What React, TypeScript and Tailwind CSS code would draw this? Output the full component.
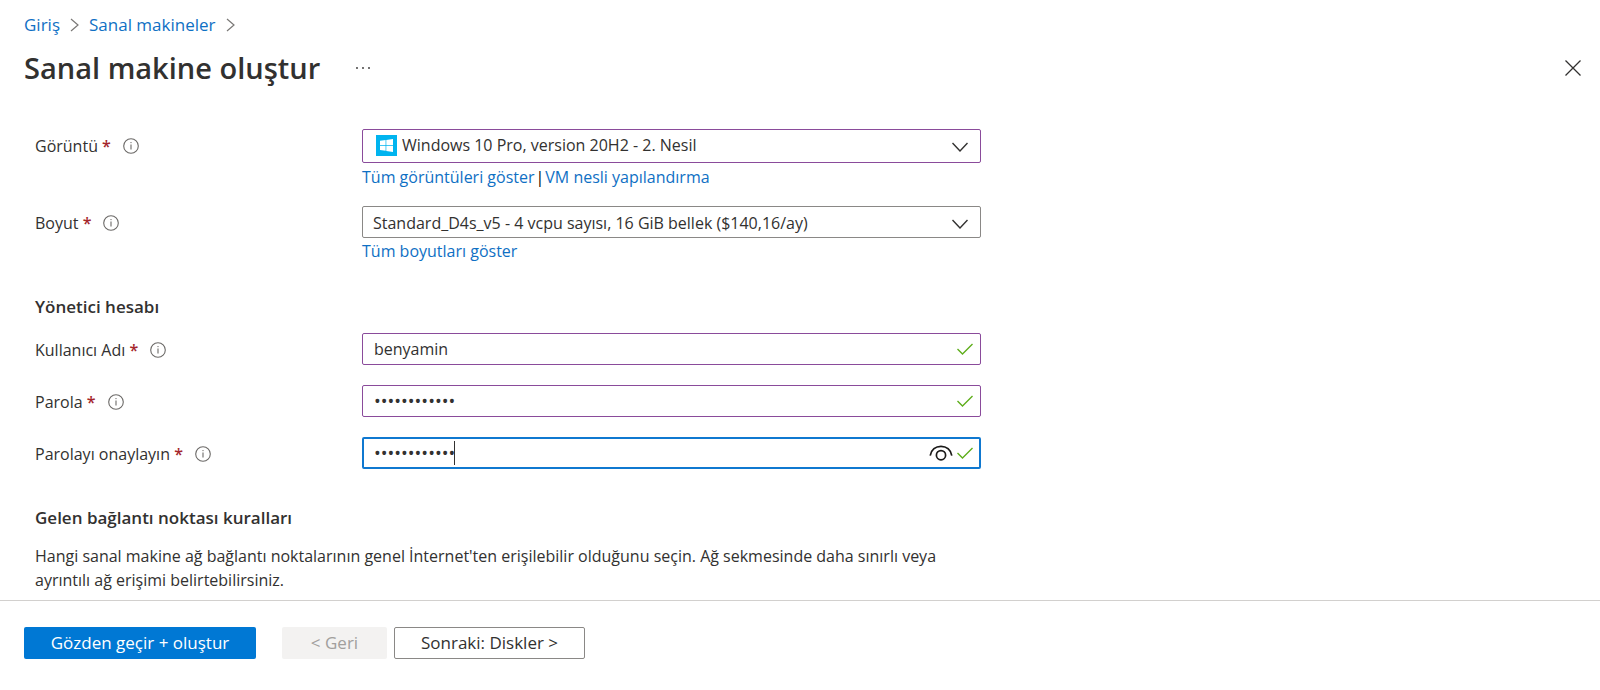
import React from 'react';

const BreadcrumbArrow: React.FC = () => (
  <svg width="9" height="14" viewBox="0 0 9 14" fill="none" stroke="#7a7876" strokeWidth="1.2" aria-hidden="true">
    <path d="M1 1l7 6-7 6" />
  </svg>
);

const InfoIcon: React.FC = () => (
  <svg width="16" height="16" viewBox="0 0 16 16" fill="none" stroke="#6b6967" aria-hidden="true">
    <circle cx="8" cy="8" r="7.3" strokeWidth="1.1" />
    <path d="M8 6.6v5" strokeWidth="1.1" />
    <circle cx="8" cy="4.6" r="0.7" fill="#6b6967" stroke="none" />
  </svg>
);

const ChevronDown: React.FC = () => (
  <svg
    className="pointer-events-none absolute top-3 right-3"
    width="16"
    height="10"
    viewBox="0 0 16 10"
    fill="none"
    stroke="#323130"
    strokeWidth="1.4"
    aria-hidden="true"
  >
    <path d="M0.5 1L8 9 15.5 1" />
  </svg>
);

const CheckIcon: React.FC = () => (
  <svg width="16" height="12" viewBox="0 0 16 12" fill="none" stroke="#5fae1c" strokeWidth="1.4" aria-hidden="true">
    <path d="M0.5 6l5 5L15.5 1" />
  </svg>
);

const EyeIcon: React.FC = () => (
  <svg width="24" height="16" viewBox="0 0 24 16" fill="none" stroke="#1b1a19" strokeWidth="1.7" aria-hidden="true">
    <path d="M1.2 10.6C2.2 4.8 6.6 1.3 12 1.3S21.8 4.8 22.8 10.6" />
    <circle cx="12" cy="10.2" r="4.6" />
  </svg>
);

const WindowsIcon: React.FC = () => (
  <svg className="shrink-0" width="21" height="21" viewBox="0 0 21 21" aria-hidden="true">
    <rect width="21" height="21" fill="#00b4ef" />
    <path fill="#fff" d="M4 5.8l5.6-.8v5H4zM10.3 4.9L17 4v6h-6.7zM4 10.7h5.6v5L4 14.9zM10.3 10.7H17v6.2l-6.7-1z" />
  </svg>
);

interface FieldLabelProps {
  htmlFor: string;
  text: string;
}

const FieldLabel: React.FC<FieldLabelProps> = ({ htmlFor, text }) => (
  <div className="flex h-[34px] w-[327px] shrink-0 items-center">
    <label htmlFor={htmlFor}>
      {text} <span className="font-semibold text-[#a4262c]">*</span>
    </label>
    <button type="button" className="ml-3" aria-label={`${text} bilgisi`}>
      <InfoIcon />
    </button>
  </div>
);

const link = 'text-[#0f70c4] hover:underline';

const App: React.FC = () => {
  return (
    <div className="flex min-h-screen flex-col bg-white font-['Segoe_UI','Open_Sans',sans-serif] text-base text-[#323130]">
      <header className="px-6 pt-3">
        <nav className="flex h-[26px] items-center gap-2.5 text-[17px]" aria-label="İçerik haritası">
          <a href="#" className={link}>Giriş</a>
          <BreadcrumbArrow />
          <a href="#" className={link}>Sanal makineler</a>
          <BreadcrumbArrow />
        </nav>
        <div className="mt-1.5 flex h-12 items-center">
          <h1 className="text-[29px] font-semibold">Sanal makine oluştur</h1>
          <button type="button" className="ml-9" aria-label="Diğer">
            <svg width="14" height="4" viewBox="0 0 14 4" fill="#323130">
              <circle cx="1" cy="2" r="0.9" />
              <circle cx="7" cy="2" r="0.9" />
              <circle cx="13" cy="2" r="0.9" />
            </svg>
          </button>
          <button type="button" className="-mr-[5px] ml-auto" aria-label="Kapat">
            <svg width="16" height="16" viewBox="0 0 16 16" stroke="#323130" strokeWidth="1.3">
              <path d="M0.5 0.5l15 15M15.5 0.5l-15 15" />
            </svg>
          </button>
        </div>
      </header>

      <main className="px-[35px] pt-[37px] pb-2">
        <div className="flex">
          <FieldLabel htmlFor="image" text="Görüntü" />
          <div className="w-full max-w-[619px]">
            <div className="relative flex h-[34px] items-center rounded-xs border border-[#8a4b9b] pb-0.5 pl-[13px]">
              <WindowsIcon />
              <select id="image" className="h-full flex-1 appearance-none bg-transparent pl-[5px] outline-none">
                <option>Windows 10 Pro, version 20H2 - 2. Nesil</option>
              </select>
              <ChevronDown />
            </div>
            <div className="mt-0.5 leading-6">
              <a href="#" className={link}>Tüm görüntüleri göster</a>
              <span className="mx-px text-black">|</span>
              <a href="#" className={link}>VM nesli yapılandırma</a>
            </div>
          </div>
        </div>

        <div className="mt-[17px] flex">
          <FieldLabel htmlFor="size" text="Boyut" />
          <div className="w-full max-w-[619px]">
            <div className="relative flex h-8 items-center rounded-xs border border-[#8a8886]">
              <select id="size" className="h-full flex-1 appearance-none bg-transparent pt-0.5 pl-2.5 outline-none">
                <option>Standard_D4s_v5 - 4 vcpu sayısı, 16 GiB bellek ($140,16/ay)</option>
              </select>
              <ChevronDown />
            </div>
            <div className="mt-px leading-6">
              <a href="#" className={link}>Tüm boyutları göster</a>
            </div>
          </div>
        </div>

        <h2 className="mt-8 text-[17px] leading-6 font-semibold">Yönetici hesabı</h2>

        <div className="mt-3.5 flex flex-col gap-[18px]">
          <div className="flex">
            <FieldLabel htmlFor="username" text="Kullanıcı Adı" />
            <div className="flex h-8 w-full max-w-[619px] items-center rounded-xs border border-[#8a4b9b] pr-[7px] pl-[11px]">
              <input id="username" type="text" defaultValue="benyamin" className="min-w-0 flex-1 outline-none" />
              <CheckIcon />
            </div>
          </div>
          <div className="flex">
            <FieldLabel htmlFor="password" text="Parola" />
            <div className="flex h-8 w-full max-w-[619px] items-center rounded-xs border border-[#8a4b9b] pr-[7px] pl-[11px]">
              <input
                id="password"
                type="password"
                defaultValue="abcdefgh1234"
                className="min-w-0 flex-1 text-lg outline-none"
              />
              <CheckIcon />
            </div>
          </div>
          <div className="flex">
            <FieldLabel htmlFor="confirm" text="Parolayı onaylayın" />
            <div className="relative flex h-8 w-full max-w-[619px] items-center rounded-xs border-2 border-[#0f78d0] pr-1.5 pl-2.5">
              <input
                id="confirm"
                type="password"
                defaultValue="abcdefgh1234"
                className="min-w-0 flex-1 text-lg caret-transparent outline-none"
              />
              <span className="absolute top-0.5 left-[90px] h-6 w-px bg-[#323130]" />
              <button type="button" className="mr-1" aria-label="Parolayı göster">
                <EyeIcon />
              </button>
              <CheckIcon />
            </div>
          </div>
        </div>

        <h2 className="mt-[35px] text-[17px] leading-6 font-semibold">Gelen bağlantı noktası kuralları</h2>
        <p className="mt-3.5 max-w-[946px] leading-6">
          Hangi sanal makine ağ bağlantı noktalarının genel İnternet'ten erişilebilir olduğunu seçin. Ağ sekmesinde daha
          sınırlı veya ayrıntılı ağ erişimi belirtebilirsiniz.
        </p>
      </main>

      <footer className="flex border-t border-[#d2d0ce] px-6 pt-[26px] text-[17px]">
        <button type="button" className="h-8 w-[232px] rounded-xs bg-[#0078d4] text-white">
          Gözden geçir + oluştur
        </button>
        <button type="button" disabled className="ml-[26px] h-8 w-[105px] rounded-xs bg-[#f3f2f1] text-[#a19f9d]">
          &lt; Geri
        </button>
        <button type="button" className="ml-[7px] h-8 w-[191px] rounded-xs border border-[#8a8886]">
          Sonraki: Diskler &gt;
        </button>
      </footer>
    </div>
  );
};

export default App;
